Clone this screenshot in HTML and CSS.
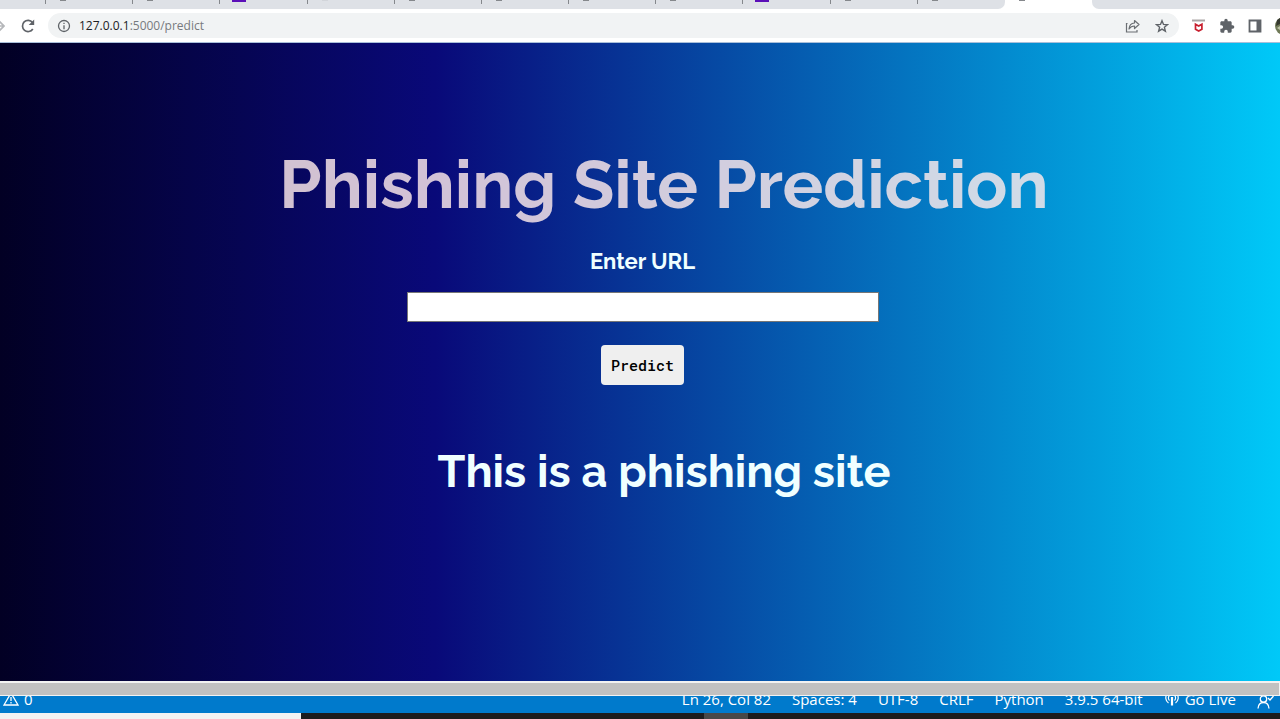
FILE: index.html
```html
<!DOCTYPE html>
<html lang="en">
<head>
<meta charset="utf-8">
<title>Phishing Site Prediction</title>
<link rel="stylesheet" href="styles.css">
</head>
<body>
<div class="tabs">
  <div class="tab lead"></div>
  <div class="tab"><i class="dot"></i></div>
  <div class="tab"><i class="dot"></i></div>
  <div class="tab"><i class="dot purple"></i></div>
  <div class="tab"><i class="dot pale"></i></div>
  <div class="tab"><i class="dot"></i></div>
  <div class="tab"><i class="dot"></i></div>
  <div class="tab"><i class="dot"></i></div>
  <div class="tab"><i class="dot"></i></div>
  <div class="tab"><i class="dot purple"></i></div>
  <div class="tab"><i class="dot"></i></div>
  <div class="tab last"><i class="dot"></i></div>
  <div class="tab active"><i class="dot"></i></div>
  <div class="strip-end"></div>
</div>
<div class="toolbar">
  <button class="icon forward" aria-label="Forward"><svg width="5" height="16" viewBox="0 0 5 16" fill="none" stroke="#b5b7ba" stroke-width="1.6"><path d="M0 8h4M-1 3l5 5-5 5"/></svg></button>
  <button class="icon reload" aria-label="Reload"><svg width="16" height="16" viewBox="0 0 16 16"><path d="M12.8 11A5.6 5.6 0 1 1 12.5 4.500" fill="none" stroke="#5f6368" stroke-width="1.7"/><path d="M14.200 1.500v5.500H8.700z" fill="#5f6368"/></svg></button>
  <div class="omnibox">
    <svg width="14" height="14" viewBox="0 0 14 14" fill="none" stroke="#5f6368" stroke-width="1.300"><circle cx="7" cy="7" r="5.500"/><path d="M7 6.300v3.900M7 3.700v1.400"/></svg>
    <span class="url"><b>127.0.0.1</b>:5000/predict</span>
    <button class="icon" aria-label="Share"><svg width="16" height="16" viewBox="0 0 16 16" fill="none" stroke="#6b6f73" stroke-width="1.200"><path d="M2.500 5.500h-1v8.500h10.500v-2"/><path d="M4 11c.3-4 2.200-5.800 5.500-6V2.500l4.500 4-4.500 4V8C7 8 5.300 9 4 11z" stroke-linejoin="round"/></svg></button>
    <button class="icon" aria-label="Bookmark"><svg width="14" height="14" viewBox="0 0 14 14" fill="none" stroke="#5f6368" stroke-width="1.400"><path d="M7 1.700l1.500 3.700 4 .3-3.100 2.600 1 3.900L7 10.100l-3.400 2.100 1-3.900L1.500 5.700l4-.3z"/></svg></button>
  </div>
  <div class="extensions">
    <button class="icon" aria-label="McAfee"><svg width="15" height="16" viewBox="0 0 15 16"><path d="M1 2.500h13" stroke="#aaa5a5" stroke-width="2"/><path d="M4.500 6.200v5l3.200 1.800 3.200-1.800V6.200L7.700 8z" fill="none" stroke="#c8202f" stroke-width="1.700"/></svg></button>
    <button class="icon" aria-label="Extensions"><svg width="16" height="16" viewBox="0 0 24 24"><path fill="#5f6368" d="M20.500 11H19V7c0-1.100-.9-2-2-2h-4V3.500a2.500 2.500 0 0 0-5 0V5H4c-1.100 0-2 .9-2 2v3.800h1.500a2.700 2.700 0 0 1 0 5.400H2V20c0 1.100.9 2 2 2h3.800v-1.500a2.700 2.700 0 0 1 5.400 0V22H17c1.100 0 2-.9 2-2v-4h1.500a2.500 2.500 0 0 0 0-5z"/></svg></button>
    <button class="icon" aria-label="Side panel"><svg width="14" height="14" viewBox="0 0 14 14"><path d="M1.500 1.500h11v11h-11z" fill="#fff" stroke="#5f6368" stroke-width="1.800"/><path d="M8.500 1h4.500v12H8.500z" fill="#5f6368"/></svg></button>
    <button class="icon avatar" aria-label="Profile"><svg width="5" height="18" viewBox="0 0 5 18"><circle cx="9" cy="9" r="9" fill="#707a58"/><path d="M2 3l3-2v6L1 9z" fill="#34382e"/><path d="M2 11l3-2v4z" fill="#c0c5a8"/></svg></button>
  </div>
</div>
<main class="page">
  <h1 class="title">Phishing Site Prediction</h1>
  <form class="form">
    <label class="label" for="url">Enter URL</label>
    <input class="field" id="url" type="text" name="url">
    <button class="predict" type="button">Predict</button>
  </form>
  <h2 class="result">This is a phishing site</h2>
</main>
<div class="scrollbar"></div>
<footer class="status">
  <span class="item problems"><svg width="16" height="14" viewBox="0 0 16 14" fill="none" stroke="#fff" stroke-width="1.300"><path d="M8 1l7 12H1zM8 5v4M8 10v1.500"/></svg>0</span>
  <span class="item">Ln 26, Col 82</span>
  <span class="item">Spaces: 4</span>
  <span class="item">UTF-8</span>
  <span class="item">CRLF</span>
  <span class="item">Python</span>
  <span class="item">3.9.5 64-bit</span>
  <span class="item"><svg width="16" height="14" viewBox="0 0 16 14" fill="none" stroke="#fff" stroke-width="1.200"><path d="M4.500 11A6.200 6.200 0 1 1 11.500 11M5.500 8.500a3.600 3.600 0 1 1 5 0"/><path d="M8 5v8.500" stroke-width="2.200"/></svg>Go Live</span>
  <span class="item"><svg width="17" height="15" viewBox="0 0 17 15" fill="none" stroke="#fff" stroke-width="1.300"><circle cx="6.500" cy="5" r="3.200"/><path d="M1 14.500c.3-4 2.300-6 5.500-6s5.200 2 5.500 6M11 4l2 2 3.500-4"/></svg></span>
</footer>
<div class="taskbar"><div class="search"></div><div class="task"></div></div>
</body>
</html>
```
FILE: styles.css
```css
* { box-sizing: border-box; }
body {
  margin: 0;
  min-height: 100vh;
  display: flex;
  flex-direction: column;
  overflow-x: hidden;
  background: #fff;
  font-family: "Open Sans", "Noto Sans", sans-serif;
}
h1, h2 { margin: 0; }
button { font: inherit; border: 0; padding: 0; }

.tabs { display: flex; height: 9px; background: #fff; overflow: hidden; }
.tab {
  flex: 1 1 0;
  background: linear-gradient(#85888c, #85888c) right top / 1px 4px no-repeat #dee1e6;
  padding-left: 13px;
}
.tab.lead { flex: 0 0 46px; }
.tab.last { background: #dee1e6; border-bottom-right-radius: 7px; }
.tab.active { background: #fff; }
.strip-end { flex: 0 0 188px; background: #dee1e6; border-bottom-left-radius: 7px; }
.dot { display: block; width: 6px; height: 1px; margin-left: 1px; background: #85888c; }
.dot.purple { width: 14px; height: 2px; margin-left: -1px; background: #5b0fb8; }
.dot.pale { background: #d2d5da; }

.toolbar {
  display: flex;
  align-items: center;
  height: 34px;
  border-bottom: 1px solid #a9bfda;
}
.icon { display: flex; background: none; }
.forward { width: 20px; }
.reload { width: 28px; }
.omnibox {
  flex: 1;
  display: flex;
  align-items: center;
  height: 25px;
  padding: 0 10px 0 9px;
  border-radius: 13px;
  background: #f1f3f4;
}
.omnibox .icon { margin-left: 14px; }
.url { flex: 1; margin-left: 8px; font-size: 12px; line-height: 16px; color: #777a7e; }
.url b { font-weight: 400; color: #202124; }
.extensions { display: flex; align-items: center; gap: 13px; padding-left: 12px; }

.page {
  flex: 1;
  display: flex;
  flex-direction: column;
  align-items: center;
  padding-top: 97px;
  background: linear-gradient(90deg, #020024 0%, #090979 34%, #00c9f8 100%);
  font-family: Raleway, Lato, sans-serif;
}
.title {
  padding-left: 48px;
  font-size: 68px;
  line-height: 88px;
  color: rgba(255, 235, 235, 0.82);
}
.form { display: flex; flex-direction: column; align-items: center; padding-left: 5px; }
.label { margin-top: 18px; font-size: 22px; font-weight: 700; line-height: 30px; color: #f0ffff; }
.field {
  width: 472px;
  height: 30px;
  margin-top: 16px;
  padding: 0 8px;
  border: 1px solid #767676;
  background: #fff;
  font-size: 16px;
}
.predict {
  width: 83px;
  height: 40px;
  margin-top: 23px;
  border-radius: 4px;
  background: #efefef;
  color: #000;
  font-family: "Roboto Mono", "DejaVu Sans Mono", monospace;
  font-size: 15px;
  font-weight: 500;
}
.result { margin-top: 57px; padding-left: 48px; font-size: 45px; line-height: 60px; color: #f0ffff; }

.scrollbar { height: 15px; background: #c1c1c1; border: 1px solid #f2f2f2; border-width: 2px 1px 1px 0; }
.status {
  display: flex;
  align-items: flex-end;
  gap: 21px;
  height: 17px;
  padding: 0 6px 4px 3px;
  overflow: hidden;
  background: #007acc;
  color: #fff;
  font-size: 15px;
  line-height: 20px;
  white-space: nowrap;
}
.item { display: flex; align-items: center; gap: 5px; }
.problems { margin-right: auto; }
.taskbar { display: flex; height: 6px; background: #1c1c1e; }
.search { width: 301px; background: #f2f2f2; }
.task { width: 44px; margin-left: 403px; background: #484848; }
```
